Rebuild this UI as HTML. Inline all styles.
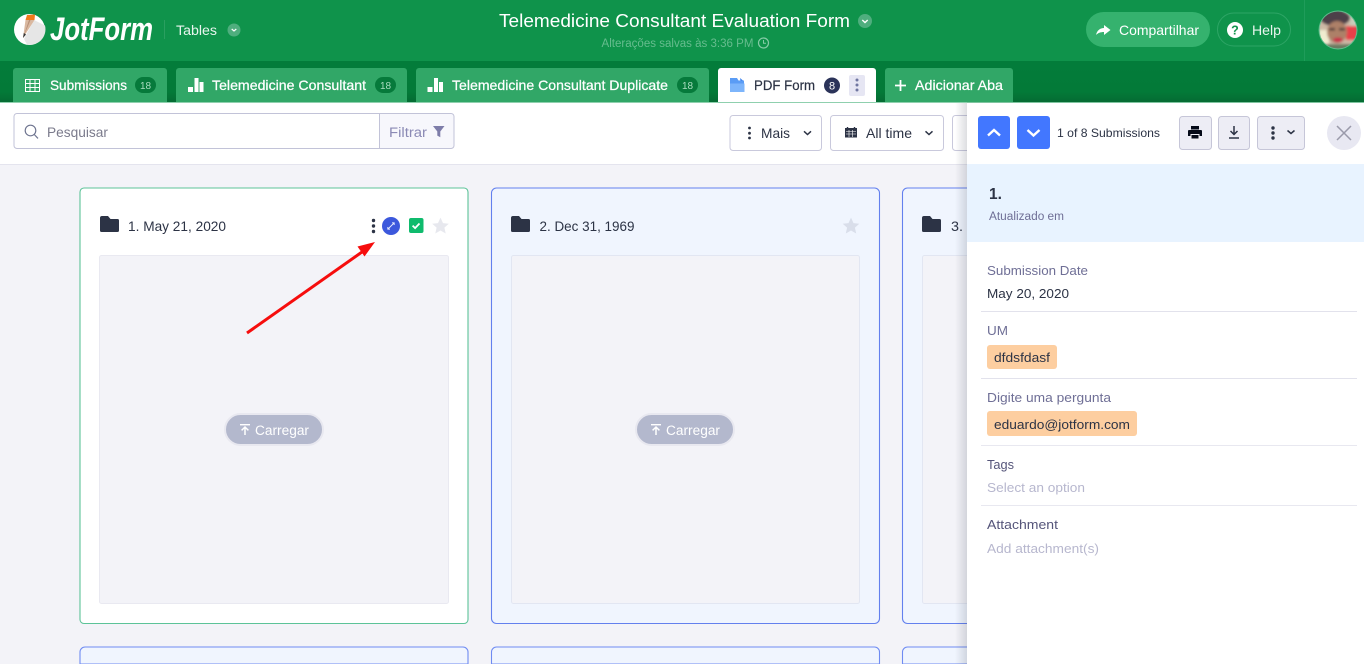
<!DOCTYPE html>
<html lang="pt"><head><meta charset="utf-8"><title>Telemedicine Consultant Evaluation Form</title>
<style>
html,body{margin:0;padding:0;width:1364px;height:664px;overflow:hidden;background:#f3f3f8}
svg{display:block;font-family:"Liberation Sans",sans-serif}
</style></head><body>
<svg width="1364" height="664" viewBox="0 0 1364 664" xmlns="http://www.w3.org/2000/svg">
<defs>
<linearGradient id="tb" x1="0" y1="0" x2="0" y2="1"><stop offset="0" stop-color="#037c3a"/><stop offset=".75" stop-color="#037a38"/><stop offset="1" stop-color="#056b33"/></linearGradient>
<linearGradient id="sh" x1="0" y1="0" x2="1" y2="0"><stop offset="0" stop-color="#2c3345" stop-opacity="0"/><stop offset="1" stop-color="#2c3345" stop-opacity=".16"/></linearGradient>
<filter id="bl" x="-20%" y="-20%" width="140%" height="140%"><feGaussianBlur stdDeviation="1.2"/></filter>
<clipPath id="av"><circle cx="1338" cy="30" r="18.5"/></clipPath>
<g id="folder"><path d="M0 2a2 2 0 0 1 2-2h6l2.500 3h7a1.500 1.500 0 0 1 1.500 1.500V14.500a1.500 1.500 0 0 1-1.500 1.500H1.500A1.500 1.500 0 0 1 0 14.500z" fill="#2c3345"/></g>
<path id="star" d="M0-8.400 2.500-2.900 8.300-2.300 3.900 1.600 5.200 7.500 0 4.500-5.200 7.500-3.900 1.600-8.300-2.300-2.500-2.900z"/>
<g id="bars" fill="#fff"><rect x="0" y="9" width="5" height="5"/><rect x="6.500" y="0" width="4" height="14"/><rect x="11.500" y="4" width="4" height="10"/></g>
<g id="upl"><rect x="0" y="0" width="10" height="1.400" fill="#fff"/><path d="M5 11V3.500M1.600 6.400 5 3l3.400 3.400" fill="none" stroke="#fff" stroke-width="1.500"/></g>
</defs>

<!-- body cards -->
<rect width="1364" height="664" fill="#f3f3f8"/>
<rect x="80" y="188" width="388" height="435.500" rx="4" fill="#fff" stroke="#5cc398" stroke-width="1.100"/>
<rect x="491.500" y="188" width="388" height="435.500" rx="5" fill="#f0f5fe" stroke="#6380ee" stroke-width="1.100"/>
<rect x="902.500" y="188" width="388" height="435.500" rx="5" fill="#f0f5fe" stroke="#6380ee" stroke-width="1.100"/>
<path d="M80 664V652a5 5 0 0 1 5-5H463a5 5 0 0 1 5 5V664z" fill="#f0f5fe" stroke="#6f8bf2" stroke-width="1.100"/>
<path d="M491.500 664V652a5 5 0 0 1 5-5H874.500a5 5 0 0 1 5 5V664z" fill="#f0f5fe" stroke="#6f8bf2" stroke-width="1.100"/>
<path d="M902.500 664V652a5 5 0 0 1 5-5H1285.500a5 5 0 0 1 5 5V664z" fill="#f0f5fe" stroke="#6f8bf2" stroke-width="1.100"/>
<rect x="99.500" y="255.500" width="349" height="348" rx="2" fill="#f3f3f8" stroke="#e9e9f1"/>
<rect x="511.500" y="255.500" width="348" height="348" rx="2" fill="#f3f3f8" stroke="#e2e6f2"/>
<rect x="922.500" y="255.500" width="348" height="348" rx="2" fill="#f3f3f8" stroke="#e2e6f2"/>

<use href="#folder" x="100" y="216"/>
<text x="128" y="231" font-size="14" fill="#2c3345" textLength="98" lengthAdjust="spacingAndGlyphs">1. May 21, 2020</text>
<g fill="#2c3345"><circle cx="373.500" cy="220.500" r="1.700"/><circle cx="373.500" cy="226" r="1.700"/><circle cx="373.500" cy="231.500" r="1.700"/></g>
<circle cx="391" cy="226" r="9" fill="#3c58dc"/>
<path d="M388 229 394 223M392 222.800h2.200v2.200M387.800 227v2.200H390" fill="none" stroke="#e6ebff" stroke-width=".9"/>
<rect x="409" y="218" width="14.500" height="15" rx="2" fill="#0fbb6d"/>
<path d="M412.600 225.600l2.500 2.500 4.400-4.600" fill="none" stroke="#fff" stroke-width="1.800"/>
<use href="#star" x="440.500" y="226" fill="#e7e8ee"/>
<path d="M247 333 362 252" stroke="#f60d0d" stroke-width="3" fill="none"/>
<path d="M375 242 357.500 246.500 364.500 256.500z" fill="#f60d0d"/>

<use href="#folder" x="511" y="216"/>
<text x="539.500" y="231" font-size="14" fill="#2c3345" textLength="95" lengthAdjust="spacingAndGlyphs">2. Dec 31, 1969</text>
<use href="#star" x="851" y="226" fill="#d9deea"/>
<use href="#folder" x="922" y="216"/>
<text x="951" y="231" font-size="14" fill="#2c3345" textLength="12" lengthAdjust="spacingAndGlyphs">3.</text>

<rect x="225" y="414" width="98" height="31" rx="15.500" fill="#b3b8cd" stroke="#e8e8f0" stroke-width="2"/>
<use href="#upl" x="240" y="424"/>
<text x="255" y="435" font-size="13.500" fill="#fff" textLength="54" lengthAdjust="spacingAndGlyphs">Carregar</text>
<rect x="636" y="414" width="98" height="31" rx="15.500" fill="#b3b8cd" stroke="#e8e8f0" stroke-width="2"/>
<use href="#upl" x="651" y="424"/>
<text x="666" y="435" font-size="13.500" fill="#fff" textLength="54" lengthAdjust="spacingAndGlyphs">Carregar</text>

<!-- toolbar -->
<rect x="0" y="103" width="1364" height="61" fill="#fff"/>
<rect x="0" y="164" width="1364" height="1" fill="#e4e4ee"/>
<rect x="379.500" y="113.500" width="74" height="35" fill="#f7f7fc"/>
<rect x="14" y="113.500" width="440" height="35" rx="3" fill="none" stroke="#c2c3d8"/>
<path d="M379.500 113.500V148.500" stroke="#c2c3d8"/>
<circle cx="30.500" cy="130.500" r="5.300" fill="none" stroke="#6f7590" stroke-width="1.200"/>
<path d="M34.300 134.500 38 138.400" stroke="#6f7590" stroke-width="1.200"/>
<text x="47" y="137" font-size="14" fill="#7b7b8c" textLength="61" lengthAdjust="spacingAndGlyphs">Pesquisar</text>
<text x="389" y="137" font-size="13.500" fill="#8b8ab5" textLength="38" lengthAdjust="spacingAndGlyphs">Filtrar</text>
<path d="M433 126h11.500l-4.200 5.500v5.700l-3-1.600v-4.100z" fill="#7e7da9"/>

<rect x="730" y="115.500" width="91.500" height="35" rx="3" fill="#fff" stroke="#c9c9dc"/>
<g fill="#2c3345"><circle cx="749.500" cy="128" r="1.400"/><circle cx="749.500" cy="133.200" r="1.400"/><circle cx="749.500" cy="138" r="1.400"/></g>
<text x="761" y="138" font-size="14" fill="#2c3345" textLength="29" lengthAdjust="spacingAndGlyphs">Mais</text>
<path d="M804 131.300 807.500 134.500 811 131.300" fill="none" stroke="#2c3345" stroke-width="1.500"/>
<rect x="830.500" y="115.500" width="113" height="35" rx="3" fill="#fff" stroke="#c9c9dc"/>
<path d="M845 128h12v9.500h-12z" fill="#2c3345"/><path d="M847.500 127v2M854.500 127v2" stroke="#2c3345" stroke-width="1.400"/>
<path d="M846 131.500h10M846 134h10M849 130v7M852.500 130v7" stroke="#fff" stroke-width=".6"/>
<text x="866" y="138" font-size="14" fill="#2c3345" textLength="46" lengthAdjust="spacingAndGlyphs">All time</text>
<path d="M925.500 131.300 929 134.500 932.500 131.300" fill="none" stroke="#2c3345" stroke-width="1.500"/>
<rect x="952.500" y="115.500" width="40" height="35" rx="3" fill="#fff" stroke="#c9c9dc"/>

<!-- panel -->
<rect x="955" y="103" width="12" height="561" fill="url(#sh)"/>
<rect x="967" y="103" width="397" height="561" fill="#fff"/>
<rect x="967" y="164" width="397" height="1" fill="#e4e4ee"/>
<rect x="978" y="116" width="32" height="33" rx="3" fill="#4277ff"/>
<path d="M988 135.500 994 130 1000 135.500" fill="none" stroke="#fff" stroke-width="2.400"/>
<rect x="1017" y="116" width="33" height="33" rx="3" fill="#4277ff"/>
<path d="M1027.500 130 1033.500 135.500 1039.500 130" fill="none" stroke="#fff" stroke-width="2.400"/>
<text x="1057" y="137" font-size="12" fill="#2c3345" textLength="103" lengthAdjust="spacingAndGlyphs">1 of 8 Submissions</text>
<rect x="1179.500" y="116.500" width="32" height="33" rx="3" fill="#ededf5" stroke="#c6c6d8"/>
<path d="M1191 126h8v3.500h-8z" fill="#050a18"/><path d="M1189 130h12a1 1 0 0 1 1 1v5h-2.500v-2h-9v2H1188v-5a1 1 0 0 1 1-1z" fill="#050a18"/><path d="M1191.500 135h7v3.500h-7z" fill="#050a18"/>
<rect x="1218.500" y="116.500" width="31" height="33" rx="3" fill="#ededf5" stroke="#c6c6d8"/>
<path d="M1234 126v8M1230.500 131l3.500 3.500 3.500-3.500" fill="none" stroke="#2c3345" stroke-width="1.500"/><path d="M1229 138h10" stroke="#2c3345" stroke-width="1.500"/>
<rect x="1257.500" y="116.500" width="47" height="33" rx="3" fill="#ededf5" stroke="#c6c6d8"/>
<g fill="#2c3345"><circle cx="1273" cy="128" r="1.700"/><circle cx="1273" cy="133" r="1.700"/><circle cx="1273" cy="138" r="1.700"/></g>
<path d="M1287.500 130.500 1291 133.500 1294.500 130.500" fill="none" stroke="#2c3345" stroke-width="1.500"/>
<circle cx="1344" cy="133" r="17" fill="#e8e8f2"/>
<path d="M1337 126 1351 140M1351 126 1337 140" stroke="#9a9aaa" stroke-width="1.500"/>

<rect x="967" y="164" width="397" height="78" fill="#e8f3ff"/>
<text x="989" y="199" font-size="15.500" font-weight="700" fill="#2c3345">1.</text>
<text x="989" y="220" font-size="11.500" fill="#6f6f96" textLength="75" lengthAdjust="spacingAndGlyphs">Atualizado em</text>
<g font-size="13">
<text x="987" y="275" fill="#6f6f96" textLength="101" lengthAdjust="spacingAndGlyphs">Submission Date</text>
<text x="987" y="298" fill="#2c3345" textLength="82" lengthAdjust="spacingAndGlyphs">May 20, 2020</text>
<text x="987" y="335" fill="#6f6f96" textLength="21" lengthAdjust="spacingAndGlyphs">UM</text>
<text x="987" y="402" fill="#6f6f96" textLength="124" lengthAdjust="spacingAndGlyphs">Digite uma pergunta</text>
<text x="987" y="469" fill="#55557a" textLength="27" lengthAdjust="spacingAndGlyphs">Tags</text>
<text x="987" y="492" fill="#b7b7ce" textLength="98" lengthAdjust="spacingAndGlyphs">Select an option</text>
<text x="987" y="529" fill="#55557a" textLength="71" lengthAdjust="spacingAndGlyphs">Attachment</text>
<text x="987" y="553" fill="#b7b7ce" textLength="112" lengthAdjust="spacingAndGlyphs">Add attachment(s)</text>
</g>
<path d="M981 311.500H1357M981 378.500H1357" stroke="#e2e2ec"/><path d="M981 445.500H1357M981 505.500H1357" stroke="#e8e8f0"/>
<rect x="987" y="345" width="70" height="24" rx="3" fill="#fdcea0"/>
<text x="994" y="362" font-size="13" fill="#2c3345" textLength="56" lengthAdjust="spacingAndGlyphs">dfdsfdasf</text>
<rect x="987" y="411" width="150" height="25" rx="3" fill="#fdcea0"/>
<text x="994" y="429" font-size="13" fill="#2c3345" textLength="136" lengthAdjust="spacingAndGlyphs">eduardo@jotform.com</text>

<!-- header -->
<rect x="0" y="0" width="1364" height="61" fill="#0f934b"/>
<rect x="0" y="61" width="1364" height="41" fill="url(#tb)"/>
<rect x="0" y="102" width="967" height="1" fill="#8fd0ae"/>
<rect x="967" y="102" width="397" height="1" fill="#7fc4a0"/>

<circle cx="29.500" cy="29.500" r="15.500" fill="#fff"/>
<path d="M34 20 45 25.500A15.500 15.500 0 0 1 27 44.500 L24 39z" fill="#e6e6e6"/>
<path d="M27 15 35 14.500 34.500 20 25.500 20z" fill="#f27a1a"/>
<path d="M25.500 20 34.500 20 23 38z" fill="#d9b8a0"/>
<path d="M29 20 30.500 20 23 38z" fill="#b89078"/>
<path d="M23 38 23.800 33 26 34.500z" fill="#333"/>
<text x="50" y="40" font-size="32" font-weight="700" font-style="italic" fill="#fff" textLength="103" lengthAdjust="spacingAndGlyphs">JotForm</text>
<path d="M164.500 20V39" stroke="#2a9f60"/>
<text x="176" y="35" font-size="13.500" fill="#e8f5ee" textLength="41" lengthAdjust="spacingAndGlyphs">Tables</text>
<circle cx="234" cy="30" r="6.500" fill="#4fae7e"/>
<path d="M231.700 29 234 31 236.300 29" fill="none" stroke="#fff" stroke-width="1.200"/>

<text x="499" y="27" font-size="18" fill="#fff" textLength="351" lengthAdjust="spacingAndGlyphs">Telemedicine Consultant Evaluation Form</text>
<circle cx="865" cy="21" r="7" fill="#4fae7e"/>
<path d="M862.300 20 865 22.500 867.700 20" fill="none" stroke="#fff" stroke-width="1.400"/>
<text x="601.500" y="47" font-size="11.500" fill="#66bc8e" textLength="152" lengthAdjust="spacingAndGlyphs">Alterações salvas às 3:36 PM</text>
<circle cx="763.500" cy="43" r="5" fill="none" stroke="#85cba6" stroke-width="1.200"/>
<path d="M763.500 40V43.300H766" fill="none" stroke="#85cba6" stroke-width="1"/>

<rect x="1086" y="12" width="124" height="35" rx="17.500" fill="#35b26e"/>
<path d="M1096 35c1-4.500 4-7 8-7V25l6.500 5-6.500 5v-3c-3.500 0-6 1-8 3z" fill="#fff"/>
<text x="1119" y="35" font-size="14" fill="#fff" textLength="80" lengthAdjust="spacingAndGlyphs">Compartilhar</text>
<rect x="1217.500" y="13" width="73" height="33" rx="16.500" fill="none" stroke="#2ea566"/>
<circle cx="1235" cy="30" r="8" fill="#fff"/>
<text x="1235" y="34.500" font-size="12.500" font-weight="700" fill="#0f934b" text-anchor="middle">?</text>
<text x="1252" y="35" font-size="14" fill="#e8f5ee" textLength="29" lengthAdjust="spacingAndGlyphs">Help</text>
<path d="M1304.500 0V61" stroke="#1f9c5a"/>

<circle cx="1338" cy="30" r="19.500" fill="#5fbd8c"/>
<g clip-path="url(#av)"><g filter="url(#bl)">
<rect x="1319" y="11" width="38" height="38" fill="#cdb8a6"/>
<rect x="1319" y="30" width="10" height="20" fill="#f0ecd0"/>
<rect x="1346" y="26" width="12" height="14" fill="#e8404a"/>
<rect x="1350" y="12" width="8" height="14" fill="#c8ccb8"/>
<ellipse cx="1335" cy="18" rx="15" ry="8" fill="#4e3f48"/>
<ellipse cx="1337" cy="32" rx="10" ry="11" fill="#ad8068"/>
<rect x="1329" y="28" width="6" height="2.500" fill="#4a3a3a"/><rect x="1339" y="28" width="6" height="2.500" fill="#4a3a3a"/>
<ellipse cx="1338" cy="40" rx="5" ry="2.500" fill="#c8304a"/>
<rect x="1322" y="44" width="32" height="6" fill="#6a7a60"/>
</g></g>

<!-- tabs -->
<g fill="#31a767">
<path d="M13 102V71a3 3 0 0 1 3-3H164a3 3 0 0 1 3 3V102z"/>
<path d="M176 102V71a3 3 0 0 1 3-3H404a3 3 0 0 1 3 3V102z"/>
<path d="M416 102V71a3 3 0 0 1 3-3H706a3 3 0 0 1 3 3V102z"/>
<path d="M885 102V71a3 3 0 0 1 3-3H1010a3 3 0 0 1 3 3V102z"/>
</g>
<path d="M718 102V71a3 3 0 0 1 3-3H873a3 3 0 0 1 3 3V102z" fill="#fff"/>

<path d="M25.500 79.500h14v12h-14zM25.500 83.500h14M25.500 87.500h14M30 79.500v12M35 79.500v12" fill="none" stroke="#fff" stroke-width="1"/>
<g font-size="14" font-weight="400" fill="#fff" stroke="#fff" stroke-width=".25">
<text x="50" y="90" textLength="77" lengthAdjust="spacingAndGlyphs">Submissions</text>
<text x="212" y="90" textLength="154" lengthAdjust="spacingAndGlyphs">Telemedicine Consultant</text>
<text x="452" y="90" textLength="216" lengthAdjust="spacingAndGlyphs">Telemedicine Consultant Duplicate</text>
<text x="915" y="90" textLength="88" lengthAdjust="spacingAndGlyphs">Adicionar Aba</text>
</g>
<use href="#bars" x="188" y="78"/>
<use href="#bars" x="427.500" y="78"/>
<rect x="135" y="77" width="21" height="16" rx="8" fill="#067a3b"/>
<rect x="375" y="77" width="21" height="16" rx="8" fill="#067a3b"/>
<rect x="677" y="77" width="21" height="16" rx="8" fill="#067a3b"/>
<g font-size="10" fill="#a8dcbf" text-anchor="middle">
<text x="145.500" y="89">18</text><text x="385.500" y="89">18</text><text x="687.500" y="89">18</text>
</g>
<path d="M730 78h7l1.500 2.500h5.500v3.500h-14z" fill="#5a9cf5"/>
<path d="M730 83.500h14.500V92H730z" fill="#7db5fb"/><path d="M740 78l3 2.500-2.500 .5z" fill="#3f84ee"/>
<text x="754" y="90" font-size="14" fill="#2c3345" stroke="#2c3345" stroke-width=".2" textLength="61" lengthAdjust="spacingAndGlyphs">PDF Form</text>
<circle cx="832" cy="85.500" r="8" fill="#2b3359"/>
<text x="832" y="89.500" font-size="11" fill="#fff" text-anchor="middle">8</text>
<rect x="849" y="75" width="16" height="21" rx="2" fill="#e6e6f3"/>
<g fill="#7076a0"><circle cx="857" cy="80" r="1.500"/><circle cx="857" cy="85" r="1.500"/><circle cx="857" cy="90" r="1.500"/></g>
<path d="M895 85.500h11M900.500 80v11" stroke="#fff" stroke-width="1.800"/>
</svg>
</body></html>
